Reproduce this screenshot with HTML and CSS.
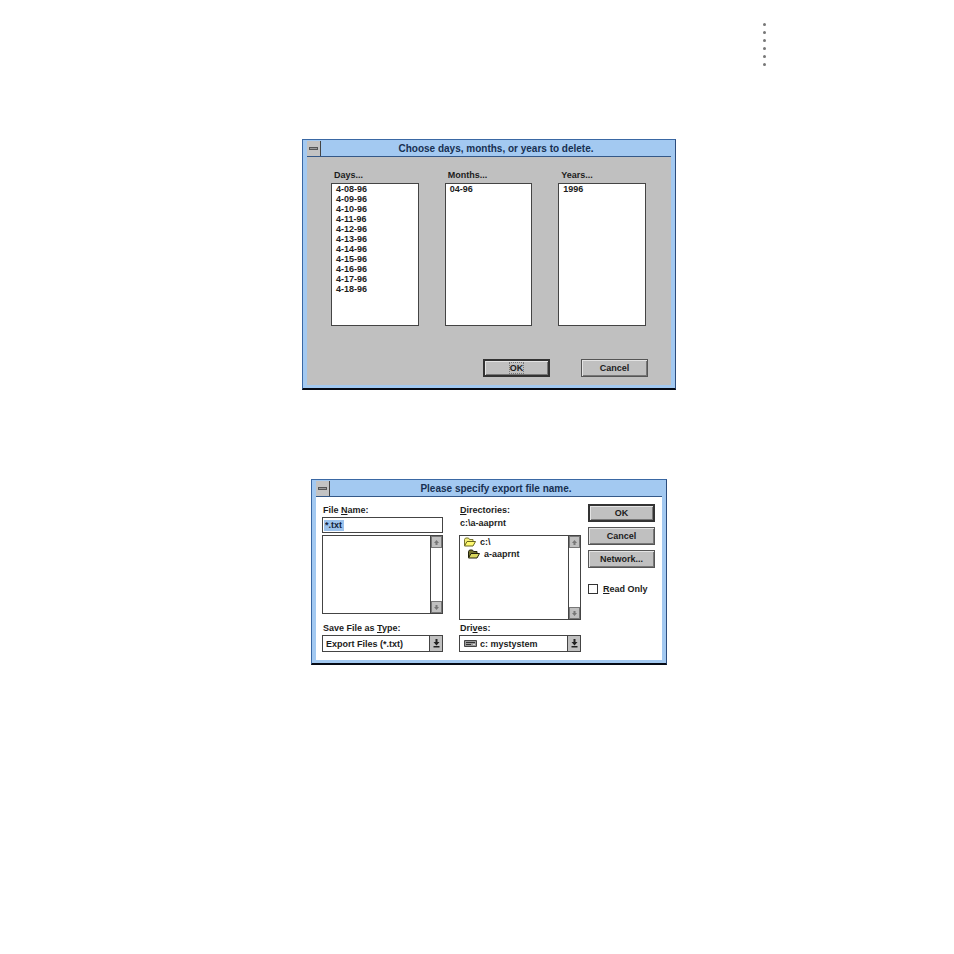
FILE: index.html
```html
<!DOCTYPE html>
<html lang="en">
<head>
<meta charset="utf-8">
<meta name="viewport" content="width=device-width, initial-scale=1">
<title>Delete and export dialogs</title>
<link rel="stylesheet" href="styles.css">
</head>
<body>
<svg class="defs" aria-hidden="true">
  <symbol id="arrow-up" viewBox="0 0 7 7"><path d="M3.500 1 6 4H4.500V6H2.500V4H1z"/></symbol>
  <symbol id="arrow-down" viewBox="0 0 7 7"><path d="M3.500 6 6 3H4.500V1H2.500V3H1z"/></symbol>
  <symbol id="drop" viewBox="0 0 7 9"><path d="M2.500 0h2v3h2L3.500 6.500.500 3h2zM.500 7h6v1.500h-6z"/></symbol>
</svg>
<main class="page">
  <div class="rule-dots" aria-hidden="true"><i></i><i></i><i></i><i></i><i></i><i></i></div>

  <form class="dialog dialog-delete">
    <header class="titlebar">
      <button type="button" class="sysmenu" aria-label="Control menu"><span></span></button>
      <h2>Choose days, months, or years to delete.</h2>
    </header>
    <div class="delete-body">
      <div class="periods">
        <div class="period">
          <label for="days">Days...</label>
          <select id="days" multiple size="11">
            <option>4-08-96</option><option>4-09-96</option><option>4-10-96</option><option>4-11-96</option><option>4-12-96</option><option>4-13-96</option><option>4-14-96</option><option>4-15-96</option><option>4-16-96</option><option>4-17-96</option><option>4-18-96</option>
          </select>
        </div>
        <div class="period">
          <label for="months">Months...</label>
          <select id="months" multiple size="11"><option>04-96</option></select>
        </div>
        <div class="period">
          <label for="years">Years...</label>
          <select id="years" multiple size="11"><option>1996</option></select>
        </div>
      </div>
      <div class="actions">
        <button type="button" class="btn btn-default"><span class="focus">OK</span></button>
        <button type="button" class="btn">Cancel</button>
      </div>
    </div>
  </form>

  <form class="dialog dialog-export">
    <header class="titlebar">
      <button type="button" class="sysmenu" aria-label="Control menu"><span></span></button>
      <h2>Please specify export file name.</h2>
    </header>
    <div class="export-body">
      <div class="column column-files">
        <label for="filename">File <u>N</u>ame:</label>
        <div class="upper"><input id="filename" class="filename" type="text" value="*.txt"></div>
        <div class="listbox files">
          <ul aria-label="Files"></ul>
          <div class="scrollbar">
            <button type="button" aria-label="Scroll up"><svg><use href="#arrow-up"/></svg></button>
            <button type="button" aria-label="Scroll down"><svg><use href="#arrow-down"/></svg></button>
          </div>
        </div>
        <label for="type" class="lower">Save File as <u>T</u>ype:</label>
        <div class="combo">
          <select id="type"><option>Export Files (*.txt)</option></select>
          <span class="combo-arrow"><svg><use href="#drop"/></svg></span>
        </div>
      </div>

      <div class="column">
        <span id="dirs"><u>D</u>irectories:</span>
        <div class="upper path">c:\a-aaprnt</div>
        <div class="listbox">
          <ul aria-labelledby="dirs">
            <li><svg class="folder" viewBox="0 0 13 10"><path d="M1.500 8.500v-6l1-1.500h3l1 1.500h3.500v2" fill="#f4ee7a" stroke="#77752f"/><path d="M1.500 9 4 4.500h8.500L10 9z" fill="#fffa70" stroke="#66641f"/></svg>c:\</li>
            <li class="child"><svg class="folder" viewBox="0 0 13 10"><path d="M1.500 8.500v-6l1-1.500h3l1 1.500h3.500v2" fill="#77752f" stroke="#22220c"/><path d="M1.500 9 4 4.500h8.500L10 9z" fill="#d9d75e" stroke="#22220c"/></svg>a-aaprnt</li>
          </ul>
          <div class="scrollbar">
            <button type="button" aria-label="Scroll up"><svg><use href="#arrow-up"/></svg></button>
            <button type="button" aria-label="Scroll down"><svg><use href="#arrow-down"/></svg></button>
          </div>
        </div>
        <label for="drive" class="lower">Dri<u>v</u>es:</label>
        <div class="combo combo-drive">
          <select id="drive"><option>c: mystystem</option></select>
          <svg class="drive" viewBox="0 0 13 7"><path d="M.500.500h12v6H.500z" fill="#999" stroke="#444"/><path d="M2 2.500h9M2 4.500h5" stroke="#333"/><path d="M9 4.500h2" stroke="#ddd"/></svg>
          <span class="combo-arrow"><svg><use href="#drop"/></svg></span>
        </div>
      </div>

      <div class="side">
        <button type="button" class="btn btn-default">OK</button>
        <button type="button" class="btn">Cancel</button>
        <button type="button" class="btn">Network...</button>
        <label class="check"><input type="checkbox"><span><u>R</u>ead Only</span></label>
      </div>
    </div>
  </form>
</main>
</body>
</html>
```
FILE: styles.css
```css
* { box-sizing: border-box; }

body {
  margin: 0;
  background: #fff;
  color: #1c1c1c;
  font: bold 9px/12px "Liberation Sans", Arial, sans-serif;
}

button, input, select { font: inherit; color: inherit; margin: 0; border-radius: 0; }
h2, ul { margin: 0; padding: 0; list-style: none; }
.defs { position: absolute; width: 0; height: 0; }

.page { display: flex; flex-direction: column; padding-top: 23px; }

/* dotted page ornament */
.rule-dots { display: grid; gap: 5px; margin-left: 80%; }
.rule-dots i { width: 3px; height: 3px; border-radius: 50%; background: #777; }

.dialog {
  align-self: center;
  margin-left: 24px;
  border: 1px solid #3a68a4;
  border-right-color: #2c4c7c;
  border-bottom: 2px solid #060a14;
  padding: 1px 4px 3px;
  background: #a3c9f1;
}
.dialog-delete { width: 100%; max-width: 374px; margin-top: 73px; }
.dialog-export { width: 100%; max-width: 356px; margin-top: 89px; }

.titlebar {
  display: flex;
  align-items: center;
  height: 16px;
  border-bottom: 1px solid #345888;
}
.titlebar h2 { flex: 1; text-align: center; color: #173052; font-size: 10px; }
.sysmenu {
  display: grid;
  place-items: center;
  width: 14px;
  height: 15px;
  padding: 0;
  border: 0;
  border-right: 1px solid #444;
  background: #c3c3c3;
}
.sysmenu span { width: 9px; height: 3px; border: 1px solid #555; background: #999; }

.btn {
  height: 18px;
  padding: 0;
  border: 1px solid #555;
  background: #c0c0c0;
  box-shadow: inset 1px 1px #e4e4e4, inset -1px -1px #777;
}
.btn-default { border: 2px solid #333; }
.focus { outline: 1px dotted #777; }

/* delete dialog */
.delete-body { padding: 12px 23px 8px 24px; background: #c0c0c0; }
.periods { display: grid; grid-template-columns: repeat(3, 1fr); gap: 26px; padding-right: 2px; }
.period { display: flex; flex-direction: column; gap: 2px; }
.period label { padding-left: 3px; }
.period select {
  height: 143px;
  padding: 0;
  overflow: hidden;
  border: 1px solid #444;
  background: #fff;
}
.period option { min-height: 0; padding: 0 4px; font-weight: bold; line-height: 10px; }
.actions { display: flex; justify-content: flex-end; gap: 31px; margin-top: 33px; }
.actions .btn { width: 67px; }

/* export dialog */
.export-body {
  display: grid;
  grid-template-columns: 130fr 122fr 67fr;
  column-gap: 7px;
  padding: 7px 7px 8px 6px;
  background: #fff;
}
.column { display: flex; flex-direction: column; }
.column-files { padding-right: 9px; }
.column > label, .column > span { padding-left: 1px; }
.upper { height: 18px; margin-top: 1px; }
.path { padding-left: 1px; }
.filename {
  display: block;
  width: 100%;
  height: 16px;
  padding: 0 2px;
  border: 1px solid #444;
  background: #fff linear-gradient(#9cc2ec, #9cc2ec) no-repeat 1px center / 20px 11px;
  color: #12233c;
}
.listbox { display: flex; height: 85px; border: 1px solid #444; }
.files { height: 79px; margin-bottom: 6px; }
.listbox ul { flex: 1; padding: 0 3px; }
.listbox li { display: flex; align-items: center; gap: 4px; }
.listbox .child { padding-left: 4px; }
.folder { width: 13px; height: 10px; }
.scrollbar { display: flex; flex-direction: column; justify-content: space-between; width: 12px; border-left: 1px solid #444; }
.scrollbar button {
  display: grid;
  place-items: center;
  height: 12px;
  padding: 0;
  border: 1px solid #777;
  background: #c0c0c0;
}
.scrollbar svg { width: 7px; height: 7px; fill: #777; }
.lower { margin: 2px 0 1px; }
.combo { position: relative; height: 17px; }
.combo select {
  appearance: none;
  display: block;
  width: 100%;
  height: 100%;
  padding: 0 14px 0 3px;
  border: 1px solid #444;
  background: #fff;
}
.combo-drive select { padding-left: 20px; }
.drive { position: absolute; left: 5px; top: 5px; width: 13px; height: 7px; }
.combo-arrow {
  position: absolute;
  top: 1px;
  right: 1px;
  bottom: 1px;
  display: grid;
  place-items: center;
  width: 13px;
  border-left: 1px solid #444;
  background: #c0c0c0;
  pointer-events: none;
}
.combo-arrow svg { width: 7px; height: 9px; fill: #222; }

.side { display: flex; flex-direction: column; gap: 5px; }
.check { display: flex; align-items: center; gap: 5px; margin-top: 10px; white-space: nowrap; }
.check input { appearance: none; width: 10px; height: 10px; border: 1px solid #333; background: #fff; }
```
